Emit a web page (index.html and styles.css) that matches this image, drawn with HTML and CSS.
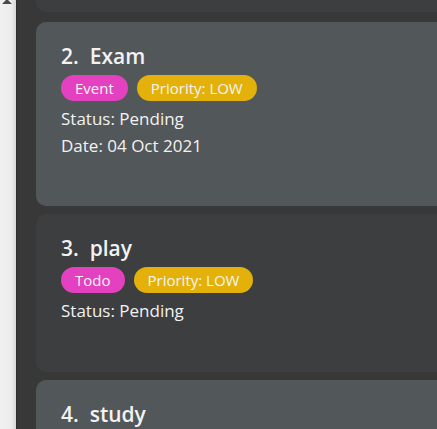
FILE: index.html
```html
<!DOCTYPE html>
<html>
<head>
<meta charset="utf-8">
<link rel="stylesheet" href="styles.css">
</head>
<body>
<div class="app">
  <div class="scrollbar"><div class="arrow-up"></div></div>
  <div class="list">
    <div class="card card-dark card-first"></div>
    <div class="card card-light">
      <div class="title">2.  Exam</div>
      <div class="tags">
        <span class="tag tag-type">Event</span>
        <span class="tag tag-priority">Priority: LOW</span>
      </div>
      <div class="line">Status: Pending</div>
      <div class="line">Date: 04 Oct 2021</div>
    </div>
    <div class="card card-dark card-short">
      <div class="title">3.  play</div>
      <div class="tags">
        <span class="tag tag-type">Todo</span>
        <span class="tag tag-priority">Priority: LOW</span>
      </div>
      <div class="line">Status: Pending</div>
    </div>
    <div class="card card-light">
      <div class="title">4.  study</div>
    </div>
  </div>
</div>
</body>
</html>
```

FILE: styles.css
```css
html, body {
  margin: 0;
  padding: 0;
  height: 100%;
  overflow: hidden;
  background: #383838;
}
.app {
  display: flex;
  height: 429px;
  font-family: "Open Sans", sans-serif;
  color: #f2f2f2;
}
.scrollbar {
  flex: none;
  width: 16px;
  background: linear-gradient(to right, #f1f1f1 0%, #ececec 70%, #d6d6d6 100%);
  border-right: 1px solid #2d2d2d;
}
.arrow-up {
  width: 0;
  height: 0;
  margin: -1px 0 0 2px;
  border-left: 5px solid transparent;
  border-right: 5px solid transparent;
  border-bottom: 5px solid #4a4a4a;
}
.list {
  flex: 1;
  display: flex;
  flex-direction: column;
  gap: 8px;
  padding-left: 19px;
  overflow: hidden;
  background: #383838;
}
.card {
  flex: none;
  width: 440px;
  border-radius: 10px;
  box-sizing: border-box;
  padding: 19px 25px 0 25px;
}
.card-first {
  height: 100px;
  margin-top: -88px;
  margin-bottom: 2px;
}
.card-light {
  background: #52575a;
  height: 184px;
}
.card-dark {
  background: #3c3e40;
}
.card-short {
  height: 158px;
}
.title {
  font-size: 21px;
  font-weight: 600;
  white-space: pre;
  line-height: 31px;
}
.tags {
  display: flex;
  gap: 9px;
  margin-top: 3px;
}
.tag {
  display: inline-block;
  height: 26px;
  line-height: 26px;
  padding: 0 14px;
  border-radius: 13px;
  font-size: 15px;
  color: #f5f5f5;
}
.tag-type {
  background: #e441c0;
}
.tag-priority {
  background: #e3b10a;
}
.line {
  font-size: 17px;
  line-height: 27px;
}
.tags + .line {
  margin-top: 4px;
}
```
